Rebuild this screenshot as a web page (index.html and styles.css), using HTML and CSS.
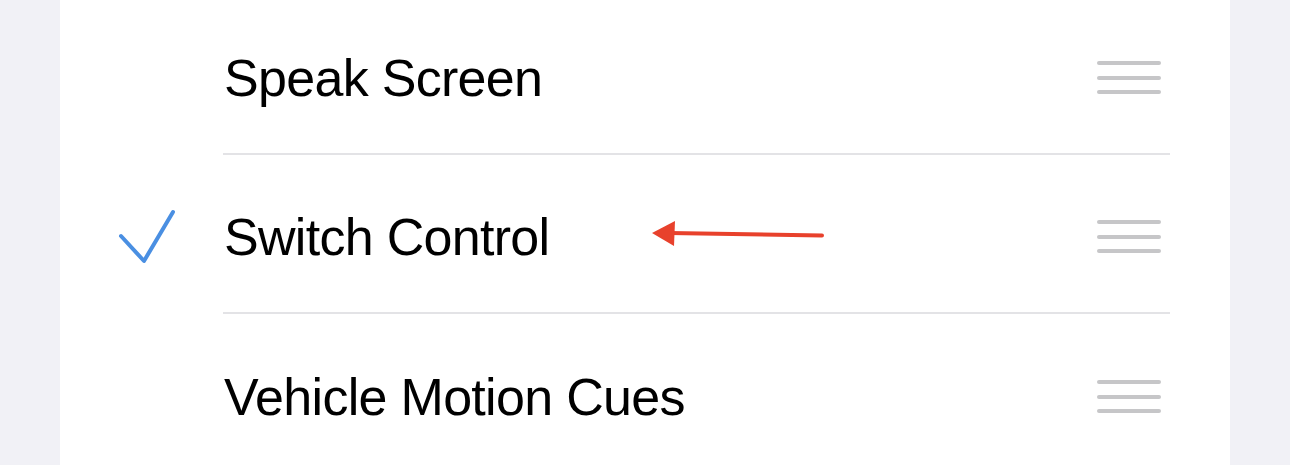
FILE: index.html
```html
<!DOCTYPE html>
<html>
<head>
<meta charset="utf-8">
<link rel="stylesheet" href="styles.css">
</head>
<body>
<div class="card">
  <div class="row">
    <div class="check"></div>
    <div class="inner">
      <span class="label">Speak Screen</span>
      <span class="handle"><i></i><i></i><i></i></span>
    </div>
  </div>
  <div class="row">
    <div class="check">
      <svg width="60" height="56" viewBox="0 0 60 56"><polyline points="3,27 26,52 55,3" fill="none" stroke="#4a8fe2" stroke-width="4" stroke-linecap="round" stroke-linejoin="round"/></svg>
    </div>
    <div class="inner">
      <span class="label">Switch Control</span>
      <svg class="arrow" width="180" height="30" viewBox="0 0 180 30"><line x1="18" y1="13" x2="171" y2="15.5" stroke="#e8412c" stroke-width="4" stroke-linecap="round"/><polygon points="1,13 24,1 23,26" fill="#e8412c"/></svg>
      <span class="handle"><i></i><i></i><i></i></span>
    </div>
  </div>
  <div class="row">
    <div class="check"></div>
    <div class="inner">
      <span class="label">Vehicle Motion Cues</span>
      <span class="handle"><i></i><i></i><i></i></span>
    </div>
  </div>
</div>
</body>
</html>
```
FILE: styles.css
```css
html, body {
  margin: 0;
  padding: 0;
}
body {
  background: #f1f1f6;
  height: 465px;
  overflow: hidden;
  font-family: "Liberation Sans", Arial, sans-serif;
}
.card {
  margin-left: 60px;
  width: 1170px;
  background: #fff;
  margin-top: -4px;
}
.row {
  display: flex;
  height: 159px;
}
.check {
  width: 163px;
  flex: none;
  display: flex;
  align-items: center;
  justify-content: flex-end;
  padding-right: 45px;
  box-sizing: border-box;
}
.check svg {
  display: block;
  margin-top: 4px;
}
.inner {
  flex: 1;
  margin-right: 60px;
  display: flex;
  align-items: center;
  border-bottom: 2px solid #e3e3e6;
  padding-left: 1px;
  padding-right: 9px;
  position: relative;
}
.row:last-child .inner {
  border-bottom: none;
}
.label {
  flex: 1;
  font-size: 52px;
  letter-spacing: -0.7px;
  color: #000;
  padding-top: 6px;
}
.handle {
  display: flex;
  flex-direction: column;
  gap: 10.5px;
  width: 64px;
  padding-top: 6px;
}
.handle i {
  display: block;
  height: 4px;
  border-radius: 2px;
  background: #c6c6c8;
}
.arrow {
  position: absolute;
  left: 428px;
  top: 65px;
}
```
